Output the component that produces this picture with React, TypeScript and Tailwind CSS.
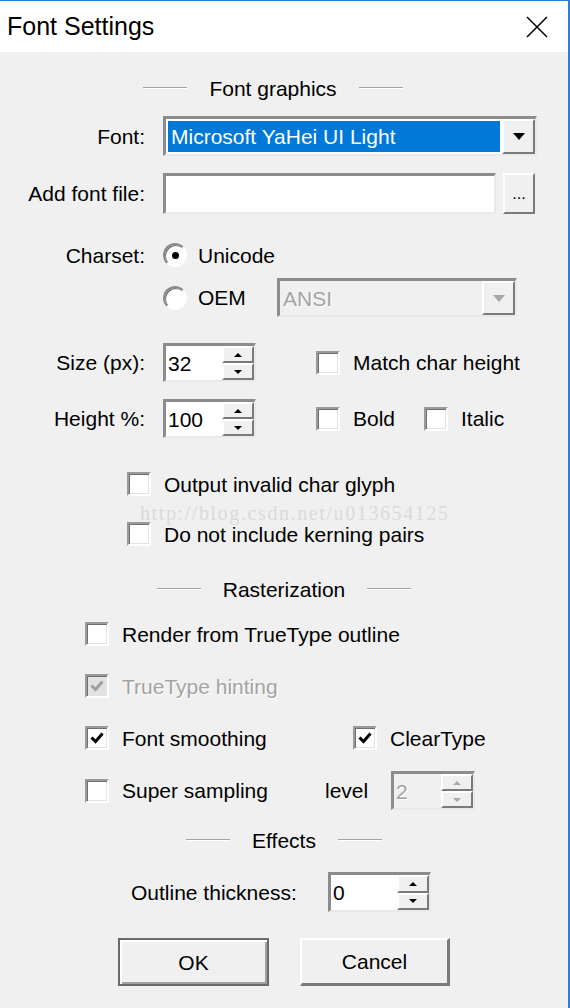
import React from "react";

const sunken =
  "border-t-[3px] border-l-[3px] border-b-2 border-r-2 border-t-[#8c8c8c] border-l-[#8c8c8c] border-b-[#e9e9e9] border-r-[#e9e9e9]";
const raised =
  "border-t-2 border-l-2 border-b-2 border-r-2 border-t-white border-l-white border-b-[#7a7a7a] border-r-[#7a7a7a] bg-[#f0f0f0]";
const dim = "text-[#a3a3a3] [text-shadow:1px_1px_0_#ffffff]";

function Check({ checked = false, disabled = false }: { checked?: boolean; disabled?: boolean }) {
  return (
    <span
      className={`flex h-6 w-6 shrink-0 items-center justify-center border-2 border-t-[#9a9a9a] border-l-[#9a9a9a] border-b-white border-r-white shadow-[inset_1px_1px_0_#707070,inset_-1px_-1px_0_#e3e3e3] ${
        disabled ? "bg-[#e2e2e2]" : "bg-white"
      }`}
    >
      {checked && (
        <svg width="16" height="16" viewBox="0 0 16 16">
          <path
            d="M2.5 7.5 L6.5 11.5 L13.5 3.5"
            fill="none"
            stroke={disabled ? "#a0a0a0" : "#000"}
            strokeWidth="3"
          />
        </svg>
      )}
    </span>
  );
}

function Radio({ checked = false }: { checked?: boolean }) {
  return (
    <span className="flex h-6 w-6 shrink-0 items-center justify-center rounded-full border-2 border-t-[#8a8a8a] border-l-[#8a8a8a] border-b-white border-r-white bg-white shadow-[inset_1px_1px_0_#6a6a6a]">
      {checked && <span className="h-[7px] w-[7px] rounded-full bg-black" />}
    </span>
  );
}

function Arrow({ w, h, up = false, color = "#000" }: { w: number; h: number; up?: boolean; color?: string }) {
  return (
    <svg width={w} height={h} viewBox={`0 0 ${w} ${h}`}>
      <polygon points={up ? `0,${h} ${w},${h} ${w / 2},0` : `0,0 ${w},0 ${w / 2},${h}`} fill={color} />
    </svg>
  );
}

function Spin({ value, width, disabled = false }: { value: string; width: string; disabled?: boolean }) {
  const c = disabled ? "#a8a8a8" : "#000";
  return (
    <div className={`flex h-full ${width} ${sunken} ${disabled ? "bg-[#f0f0f0]" : "bg-white"}`}>
      <div className={`flex flex-1 items-center pl-[2px] ${disabled ? dim : ""}`}>{value}</div>
      <div className="flex w-[32px] flex-col">
        <div className={`flex flex-1 items-center justify-center ${raised}`}>
          <Arrow w={8} h={4} up color={c} />
        </div>
        <div className={`flex flex-1 items-center justify-center ${raised}`}>
          <Arrow w={8} h={4} color={c} />
        </div>
      </div>
    </div>
  );
}

function Combo({ text, width, disabled = false }: { text: string; width: string; disabled?: boolean }) {
  return (
    <div className={`flex h-full ${width} ${sunken} ${disabled ? "bg-[#f0f0f0]" : "bg-white"}`}>
      <div className="flex flex-1 items-center p-[2px]">
        {disabled ? (
          <span className={`pl-[1px] ${dim}`}>{text}</span>
        ) : (
          <span className="flex h-full w-full items-center bg-[#0078d7] pl-[3px] text-white">{text}</span>
        )}
      </div>
      <div className={`flex w-[33px] items-center justify-center ${raised}`}>
        <Arrow w={12} h={7} color={disabled ? "#a8a8a8" : "#000"} />
      </div>
    </div>
  );
}

function Section({ title, className = "" }: { title: string; className?: string }) {
  return (
    <div className={`flex h-9 items-center justify-center ${className}`}>
      <span className="h-[2px] w-[44px] border-t border-b border-t-[#a3a3a3] border-b-white" />
      <span className="mx-[22px]">{title}</span>
      <span className="h-[2px] w-[44px] border-t border-b border-t-[#a3a3a3] border-b-white" />
    </div>
  );
}

function CheckRow({ label, checked, disabled, className = "" }: { label: string; checked?: boolean; disabled?: boolean; className?: string }) {
  return (
    <div className={`flex items-center gap-[13px] ${className}`}>
      <Check checked={checked} disabled={disabled} />
      <span className={disabled ? dim : ""}>{label}</span>
    </div>
  );
}

export default function App() {
  return (
    <div className="flex h-[1008px] w-[570px] flex-col overflow-hidden border-t border-r-2 border-[#2680d4] bg-[#f0f0f0] font-['Liberation_Sans',Arial,sans-serif] text-[21px] leading-none text-black">
      <div className="flex h-[51px] shrink-0 items-center justify-between bg-white pl-[7px] pr-[20px]">
        <span className="text-[25px]">Font Settings</span>
        <svg width="22" height="22" viewBox="0 0 22 22">
          <path d="M1 1 L21 21 M21 1 L1 21" stroke="#000" strokeWidth="1.5" />
        </svg>
      </div>

      <div className="relative flex flex-col">
        <Section title="Font graphics" className="mt-[18px] pr-[22px]" />

        <div className="mt-[10px] flex h-[40px] items-center">
          <span className="w-[145px] text-right">Font:</span>
          <div className="ml-[18px] h-full">
            <Combo text="Microsoft YaHei UI Light" width="w-[374px]" />
          </div>
        </div>

        <div className="mt-[17px] flex h-[41px] items-center">
          <span className="w-[145px] text-right">Add font file:</span>
          <div className={`ml-[18px] h-full w-[333px] bg-white ${sunken}`} />
          <div className={`ml-[7px] flex h-full w-[32px] items-end justify-center pb-[10px] text-[16px] ${raised}`}>
            ...
          </div>
        </div>

        <div className="mt-[26px] flex h-[30px] items-center">
          <span className="w-[145px] text-right">Charset:</span>
          <div className="ml-[18px] flex items-center gap-[11px]">
            <Radio checked />
            <span>Unicode</span>
          </div>
        </div>

        <div className="mt-[8px] flex h-[39px] items-center pl-[163px]">
          <Radio />
          <span className="ml-[11px] w-[79px]">OEM</span>
          <div className="h-full">
            <Combo text="ANSI" width="w-[240px]" disabled />
          </div>
        </div>

        <div className="mt-[26px] flex h-[39px] items-center">
          <span className="w-[145px] text-right">Size (px):</span>
          <div className="ml-[18px] h-full">
            <Spin value="32" width="w-[93px]" />
          </div>
          <CheckRow label="Match char height" className="ml-[60px]" />
        </div>

        <div className="mt-[17px] flex h-[39px] items-center">
          <span className="w-[145px] text-right">Height %:</span>
          <div className="ml-[18px] h-full">
            <Spin value="100" width="w-[93px]" />
          </div>
          <CheckRow label="Bold" className="ml-[60px] w-[108px]" />
          <CheckRow label="Italic" />
        </div>

        <CheckRow label="Output invalid char glyph" className="mt-[31px] h-[30px] pl-[127px]" />
        <CheckRow label="Do not include kerning pairs" className="mt-[20px] h-[30px] pl-[127px]" />

        <span className="pointer-events-none absolute left-[140px] top-[452px] font-['Liberation_Serif',serif] text-[20px] leading-[18px] tracking-[1.6px] text-[#dadada]">
          http://blog.csdn.net/u013654125
        </span>

        <Section title="Rasterization" className="mt-[22px]" />

        <CheckRow label="Render from TrueType outline" className="mt-[12px] h-[30px] pl-[85px]" />
        <CheckRow label="TrueType hinting" checked disabled className="mt-[22px] h-[30px] pl-[85px]" />

        <div className="mt-[22px] flex h-[30px] items-center pl-[85px]">
          <CheckRow label="Font smoothing" checked className="w-[268px]" />
          <CheckRow label="ClearType" checked />
        </div>

        <div className="mt-[18px] flex h-[39px] items-center pl-[85px]">
          <CheckRow label="Super sampling" className="w-[240px]" />
          <span className="w-[66px]">level</span>
          <div className="h-full">
            <Spin value="2" width="w-[84px]" disabled />
          </div>
        </div>

        <Section title="Effects" className="mt-[12px]" />

        <div className="mt-[14px] flex h-[40px] items-center pl-[131px]">
          <span className="w-[197px]">Outline thickness:</span>
          <div className="h-full">
            <Spin value="0" width="w-[103px]" />
          </div>
        </div>

        <div className="mt-[26px] flex h-[48px] items-stretch pl-[118px]">
          <button className="flex w-[151px] items-center justify-center border-2 border-[#6a6a6a] bg-[#f0f0f0] shadow-[inset_2px_2px_0_#ffffff,inset_-2px_-2px_0_#a0a0a0]">
            OK
          </button>
          <button className={`ml-[31px] flex w-[150px] items-center justify-center ${raised} border-b-[3px] border-r-[3px] border-b-[#6a6a6a] border-r-[#6a6a6a]`}>
            Cancel
          </button>
        </div>
      </div>
    </div>
  );
}
